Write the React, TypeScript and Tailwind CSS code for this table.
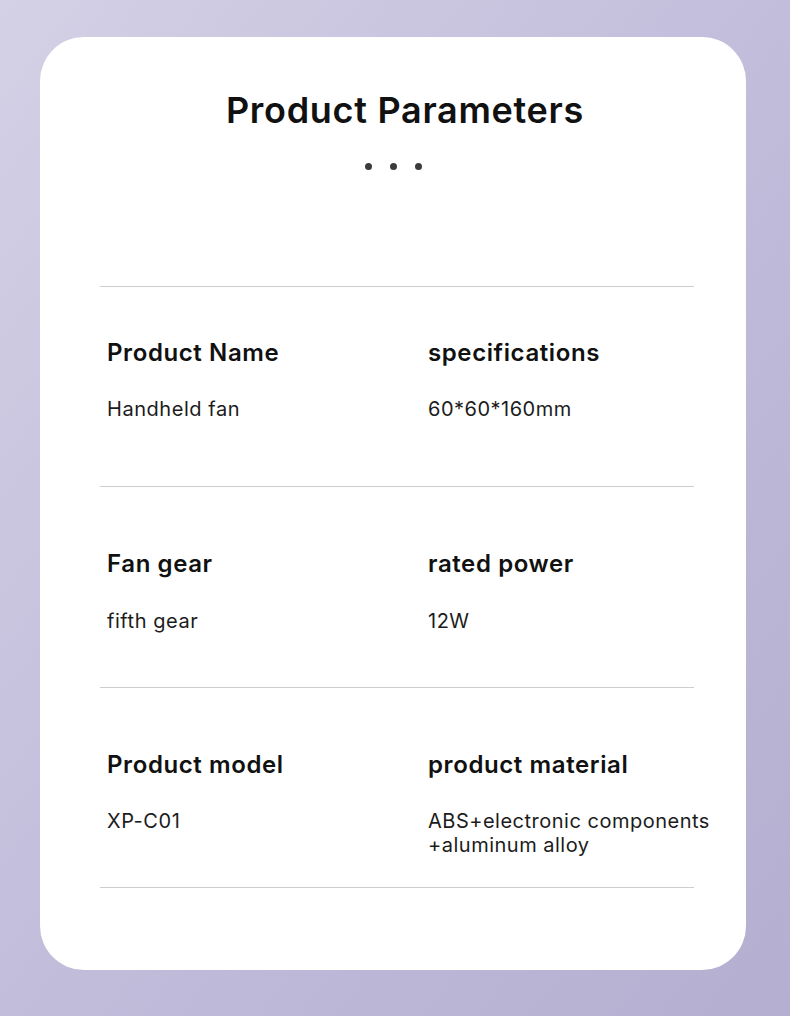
const rows = [
  { a: "Product Name", av: "Handheld fan", b: "specifications", bv: ["60*60*160mm"], pt: "pt-[52px]", mt: "mt-[30px]", pb: "pb-[65px]" },
  { a: "Fan gear", av: "fifth gear", b: "rated power", bv: ["12W"], pt: "pt-[63px]", mt: "mt-[31px]", pb: "pb-[54px]" },
  { a: "Product model", av: "XP-C01", b: "product material", bv: ["ABS+electronic components", "+aluminum alloy"], pt: "pt-[63px]", mt: "mt-[30px]", pb: "pb-[30px]" },
]

export default function App() {
  return (
    <div className="w-[790px] h-[1016px] overflow-hidden bg-gradient-to-br from-[#d4d0e5] via-[#c2bddb] to-[#b4aed0] pt-[37px] pl-[40px] font-['Inter',sans-serif]">
      <div className="w-[706px] h-[933px] rounded-[44px] bg-white pt-[51px]">
        <h1 className="pl-[24px] text-center text-[36px] leading-[44px] font-semibold tracking-[0.7px] text-[#111]">Product Parameters</h1>
        <div className="mt-[31px] flex justify-center gap-[18px]">
          <span className="h-[7px] w-[7px] rounded-full bg-[#3b3b3b]" />
          <span className="h-[7px] w-[7px] rounded-full bg-[#3b3b3b]" />
          <span className="h-[7px] w-[7px] rounded-full bg-[#3b3b3b]" />
        </div>

        <div className="mt-[116px] ml-[60px] w-[594px] border-b border-[#cdcdcd]">
          {rows.map((r) => (
            <div key={r.a} className={`border-t border-[#cdcdcd] pl-[7px] grid grid-cols-[321px_1fr] ${r.pt} ${r.pb}`}>
              <div>
                <div className="text-[24px] leading-[28px] font-semibold tracking-[0.6px] text-[#111]">{r.a}</div>
                <div className={`${r.mt} text-[20px] leading-[24px] tracking-[0.55px] text-[#1c1c1c]`}>{r.av}</div>
              </div>
              <div>
                <div className="text-[24px] leading-[28px] font-semibold tracking-[0.6px] text-[#111]">{r.b}</div>
                <div className={`${r.mt} text-[20px] leading-[24px] tracking-[0.5px] text-[#1c1c1c] whitespace-nowrap`}>
                  {r.bv.map((l) => (
                    <div key={l}>{l}</div>
                  ))}
                </div>
              </div>
            </div>
          ))}
        </div>
      </div>
    </div>
  )
}
